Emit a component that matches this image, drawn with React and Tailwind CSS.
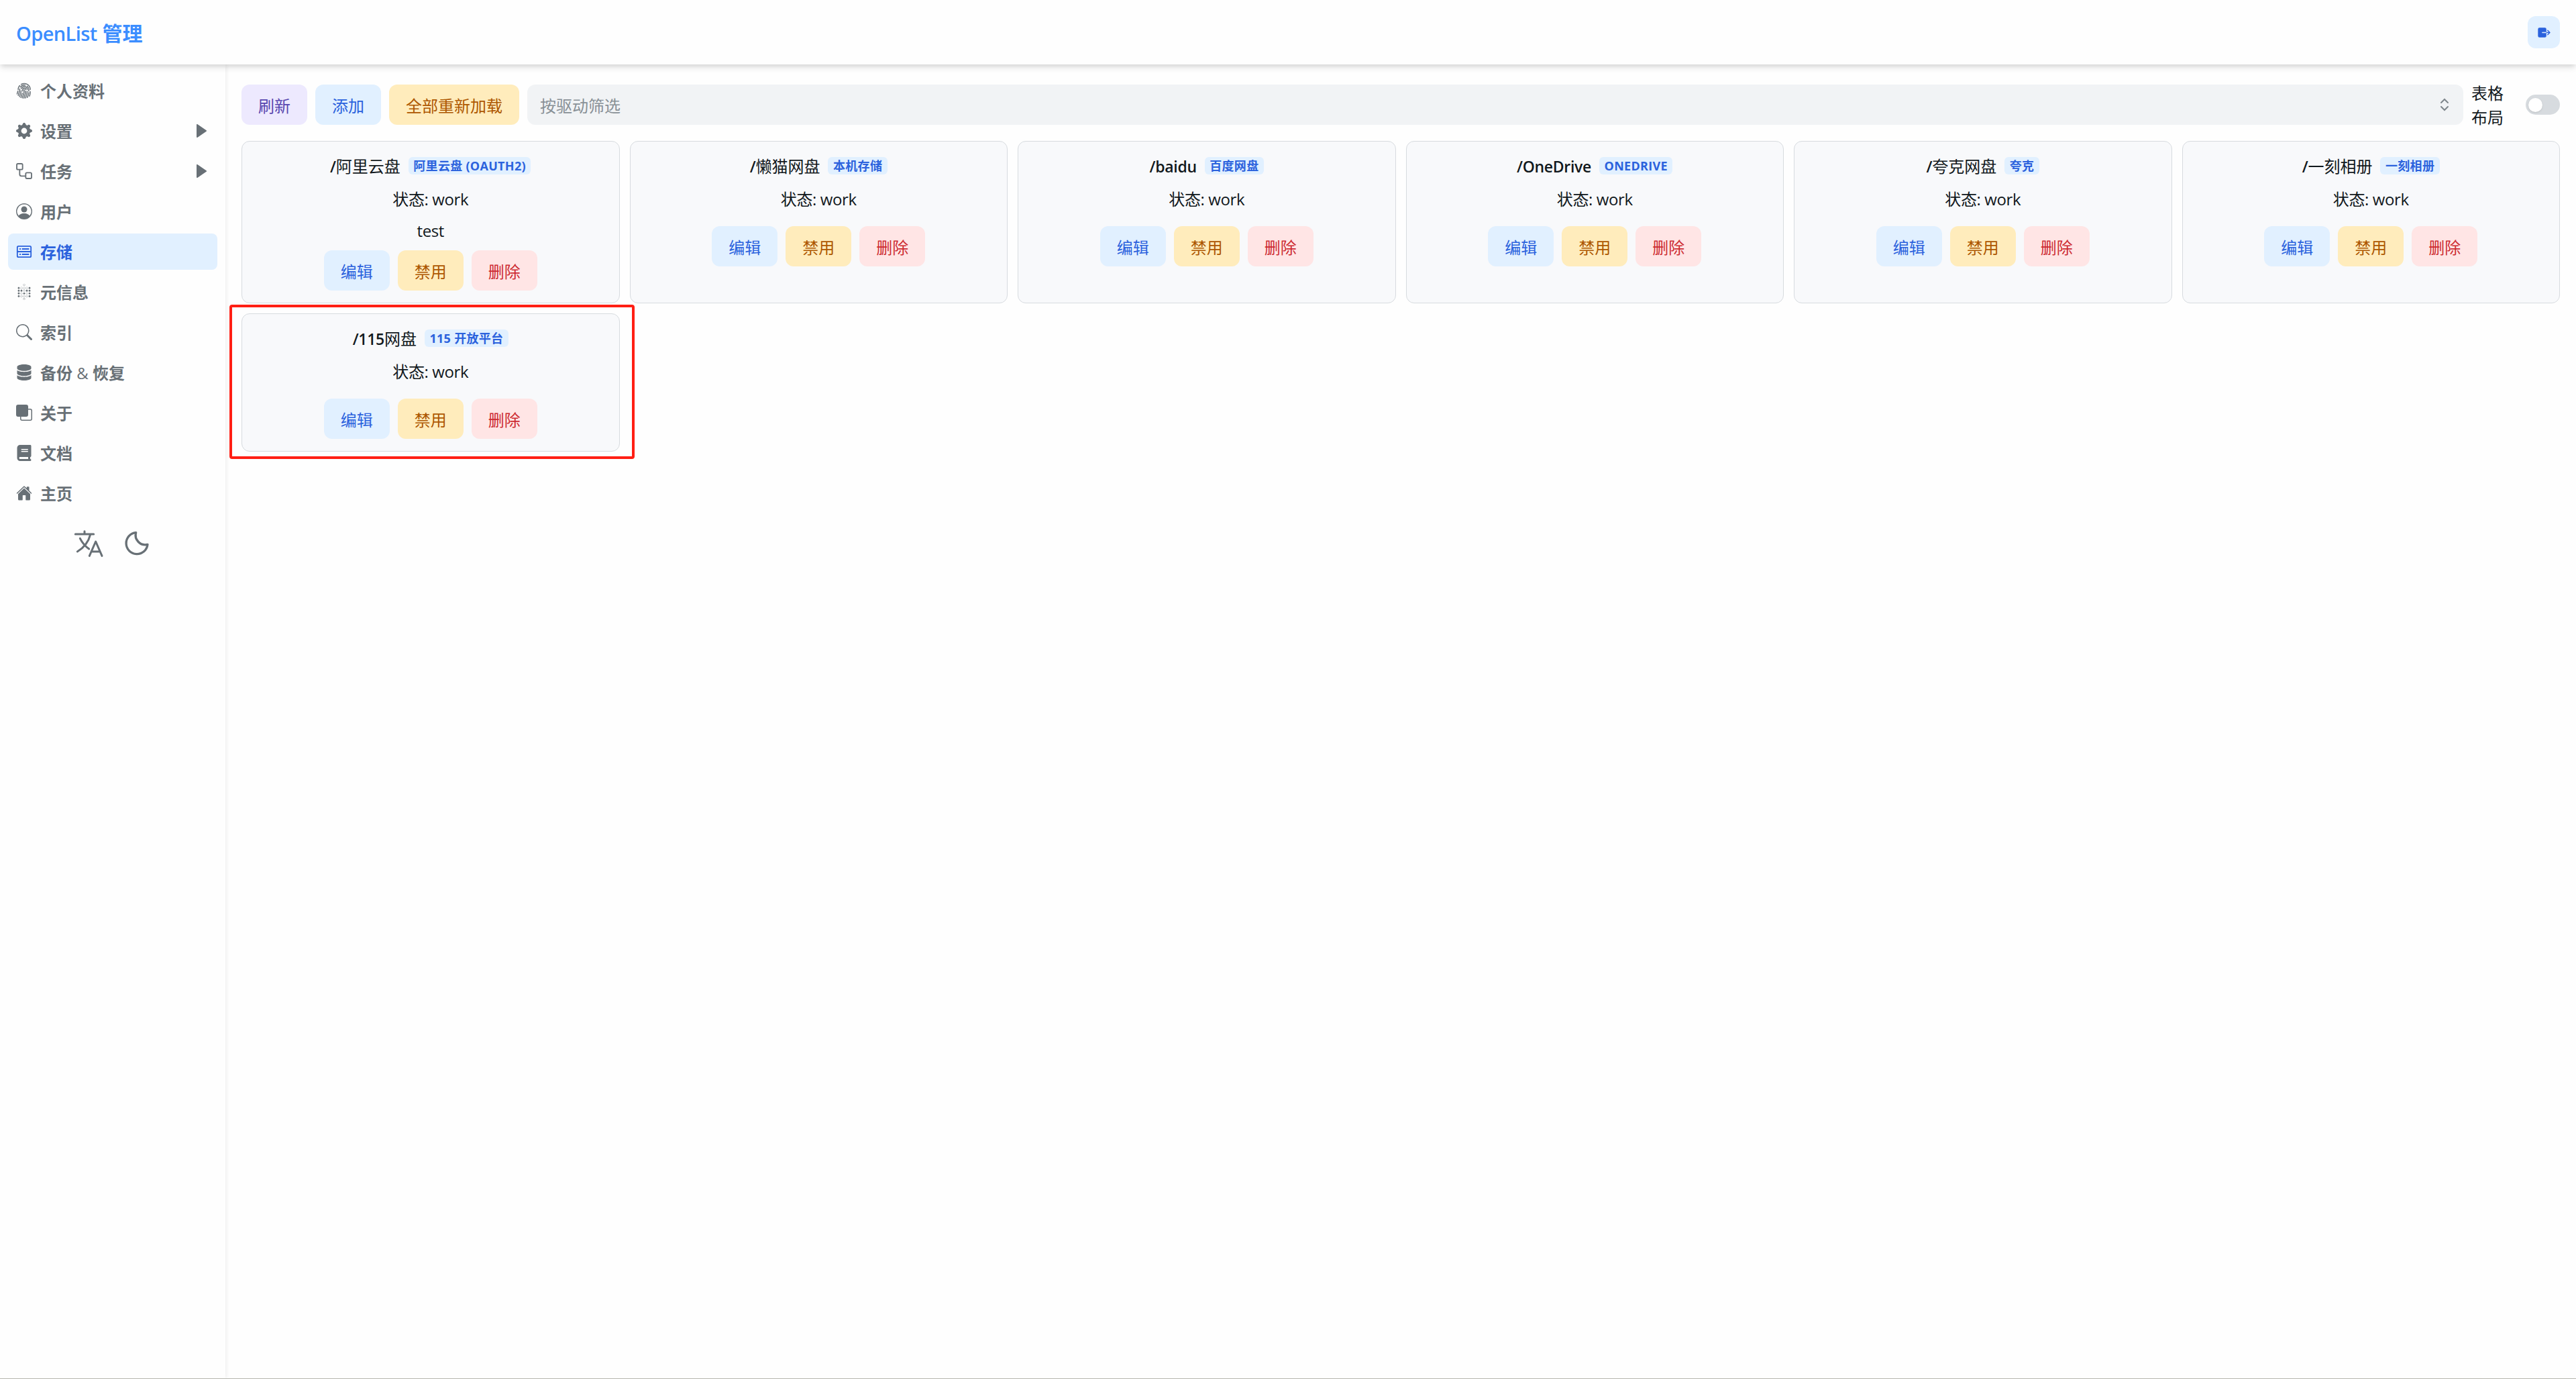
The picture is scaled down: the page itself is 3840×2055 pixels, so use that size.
import { BiSolidRightArrow } from "react-icons/bi";
import { BsFingerprint, BsFront, BsGearFill, BsPersonCircle, BsSearch } from "react-icons/bs";
import { FaBook, FaDatabase } from "react-icons/fa6";
import { IoExit, IoHome } from "react-icons/io5";
import { SiMetabase } from "react-icons/si";

function WorkflowIcon({ className }) {
  return (
    <svg className={className} viewBox="0 0 72 72" fill="none" stroke="currentColor" strokeWidth="5.5">
      <rect x="3" y="3" width="26" height="26" rx="5" />
      <rect x="43" y="43" width="26" height="26" rx="5" />
      <path d="M16 30v20a8 8 0 0 0 8 8h18" />
    </svg>
  );
}

function StorageIcon({ className }) {
  return (
    <svg className={className} viewBox="0 0 72 72" fill="none" stroke="currentColor" strokeWidth="5.5">
      <rect x="5.5" y="11.5" width="61" height="49" rx="5" />
      <path d="M6 36h60M15 24h6M26 24h32M15 48h6M26 48h32" />
    </svg>
  );
}

function LanguageIcon({ className }) {
  return (
    <svg
      className={className}
      viewBox="24 18 144 144"
      fill="none"
      stroke="currentColor"
      strokeWidth="9"
      strokeLinecap="round"
      strokeLinejoin="round"
    >
      <path d="M37 48h82M78 35v13M104 50c-8 32-28 58-58 76M58 67c9 18 22 34 40 47" />
      <path d="M100 145l28-64 28 64M109 126h38" />
    </svg>
  );
}

function MoonIcon({ className }) {
  return (
    <svg
      className={className}
      viewBox="240 18 144 144"
      fill="none"
      stroke="currentColor"
      strokeWidth="10"
      strokeLinecap="round"
      strokeLinejoin="round"
    >
      <path d="M308 41a48 48 0 1 0 52 53a43 43 0 0 1-52-53z" />
    </svg>
  );
}

const menu = [
  { title: "个人资料", icon: BsFingerprint },
  { title: "设置", icon: BsGearFill, children: true },
  { title: "任务", icon: WorkflowIcon, children: true },
  { title: "用户", icon: BsPersonCircle },
  { title: "存储", icon: StorageIcon, active: true },
  { title: "元信息", icon: SiMetabase },
  { title: "索引", icon: BsSearch },
  { title: "备份 & 恢复", icon: FaDatabase },
  { title: "关于", icon: BsFront },
  { title: "文档", icon: FaBook },
  { title: "主页", icon: IoHome },
];

const storages = [
  { path: "/阿里云盘", driver: "阿里云盘 (OAUTH2)", status: "work", remark: "test" },
  { path: "/懒猫网盘", driver: "本机存储", status: "work" },
  { path: "/baidu", driver: "百度网盘", status: "work" },
  { path: "/OneDrive", driver: "ONEDRIVE", status: "work" },
  { path: "/夸克网盘", driver: "夸克", status: "work" },
  { path: "/一刻相册", driver: "一刻相册", status: "work" },
  { path: "/115网盘", driver: "115 开放平台", status: "work", marked: true },
];

const tones = {
  accent: "bg-[#ede9fe] text-[#5746af]",
  primary: "bg-[#e1f0ff] text-[#2b62dd]",
  warning: "bg-[#ffecbc] text-[#ad5700]",
  danger: "bg-[#ffe5e5] text-[#cd2b31]",
};

function Button({ tone, children }) {
  return (
    <button
      className={`h-[60px] shrink-0 rounded-xl px-[25px] pt-[3px] text-2xl leading-[36px] whitespace-nowrap ${tones[tone]}`}
    >
      {children}
    </button>
  );
}

function Header() {
  return (
    <header className="relative z-20 flex h-24 items-center justify-between bg-[#fefefe] px-6 shadow-[0_6px_9px_-1px_rgba(0,0,0,0.1),0_3px_6px_-1px_rgba(0,0,0,0.08)]">
      <h1 className="pt-0.5 text-[30px] leading-[45px] text-[#3b8dff]">
        <span className="text-[29px] font-semibold tracking-[-0.6px]">OpenList</span>{" "}
        <span className="font-bold">管理</span>
      </h1>
      <button className="flex size-12 items-center justify-center rounded-xl bg-[#e1f0ff] text-[#2b62dd]">
        <IoExit className="size-[21px]" />
      </button>
    </header>
  );
}

function SideMenu() {
  return (
    <aside className="z-10 w-[336px] shrink-0 bg-[#fefefe] p-3 shadow-[1px_0_6px_rgba(0,0,0,0.08)]">
      <nav className="flex flex-col gap-1.5">
        {menu.map(({ title, icon: Icon, children, active }) => (
          <a
            key={title}
            className={`flex h-[54px] items-center gap-3 rounded-lg px-3 text-2xl font-bold ${
              active ? "bg-[#e1f0ff] text-[#2b62dd]" : "text-[#687076]"
            }`}
          >
            <Icon className="size-6 shrink-0" />
            <span className="grow pt-0.5 leading-[36px]">
              {title.split("&").map((part, i) => (
                <span key={part}>
                  {i > 0 && <span className="font-medium">&</span>}
                  {part}
                </span>
              ))}
            </span>
            {children && <BiSolidRightArrow className="size-6" />}
          </a>
        ))}
      </nav>
      <div className="mt-6 flex items-center justify-center gap-6 text-[#687076]">
        <LanguageIcon className="size-12" />
        <MoonIcon className="size-12" />
      </div>
    </aside>
  );
}

function Toolbar() {
  return (
    <div className="flex h-[72px] items-center gap-3">
      <Button tone="accent">刷新</Button>
      <Button tone="primary">添加</Button>
      <Button tone="warning">全部重新加载</Button>
      <div className="flex h-[60px] grow items-center justify-between rounded-xl bg-[#f1f3f5] pr-[16px] pl-[19px] text-2xl text-[#889096]">
        <span className="pt-[3px]">按驱动筛选</span>
        <svg
          className="size-6"
          viewBox="0 0 24 24"
          fill="none"
          stroke="#7e868c"
          strokeWidth="2"
          strokeLinecap="round"
        >
          <path d="M7 9l5-5 5 5M7 15l5 5 5-5" />
        </svg>
      </div>
      <label className="flex w-[132px] shrink-0 items-center justify-between">
        <span className="w-12 pt-0.5 text-2xl leading-[36px] text-[#11181c]">表格布局</span>
        <span className="flex h-[30px] w-[51px] items-center rounded-full bg-[#d7dbdf] px-1">
          <span className="size-[21px] rounded-full bg-white shadow-sm" />
        </span>
      </label>
    </div>
  );
}

function StorageCard({ path, driver, status, remark, marked }) {
  // the latin part of a mount path is drawn heavier than the chinese part
  const [latin] = path.match(/^[/\w]+/);

  return (
    <div className="relative flex flex-col items-center gap-3 rounded-xl border border-[#d7dbdf] bg-[#f8f9fb] p-[18px] text-2xl leading-[36px] text-[#11181c]">
      <div className="flex h-9 items-center gap-3">
        <span className="pt-0.5">
          <span className="text-[23px] font-semibold tracking-[-0.3px]">{latin}</span>
          {path.slice(latin.length)}
        </span>
        <span className="h-[26px] rounded-md bg-[#e1f0ff] px-[7.5px] text-[18px] leading-[26px] font-bold tracking-[0.3px] text-[#2b62dd]">
          {driver}
        </span>
      </div>
      <p className="h-9 pt-0.5 tracking-[-0.4px]">状态: {status}</p>
      {remark ? <p className="h-9 pt-px tracking-[-0.4px]">{remark}</p> : <p />}
      <div className="flex gap-3">
        <Button tone="primary">编辑</Button>
        <Button tone="warning">禁用</Button>
        <Button tone="danger">删除</Button>
      </div>
      {marked && (
        <div className="absolute -top-[14px] -right-[23px] -bottom-[12px] -left-[19px] rounded-[4px] border-4 border-[#ff1f14]" />
      )}
    </div>
  );
}

export default function App() {
  return (
    <div className="flex h-[2055px] w-full flex-col overflow-hidden border-b border-[#b5b6ae] bg-[#fefefe] font-['Open_Sans','Noto_Sans_CJK_SC',sans-serif]">
      <Header />
      <div className="flex min-h-0 grow">
        <SideMenu />
        <main className="flex grow flex-col gap-[18px] px-6 pt-6">
          <Toolbar />
          <div className="grid grid-cols-6 gap-[15px]">
            {storages.map((storage) => (
              <StorageCard key={storage.path} {...storage} />
            ))}
          </div>
        </main>
      </div>
    </div>
  );
}
